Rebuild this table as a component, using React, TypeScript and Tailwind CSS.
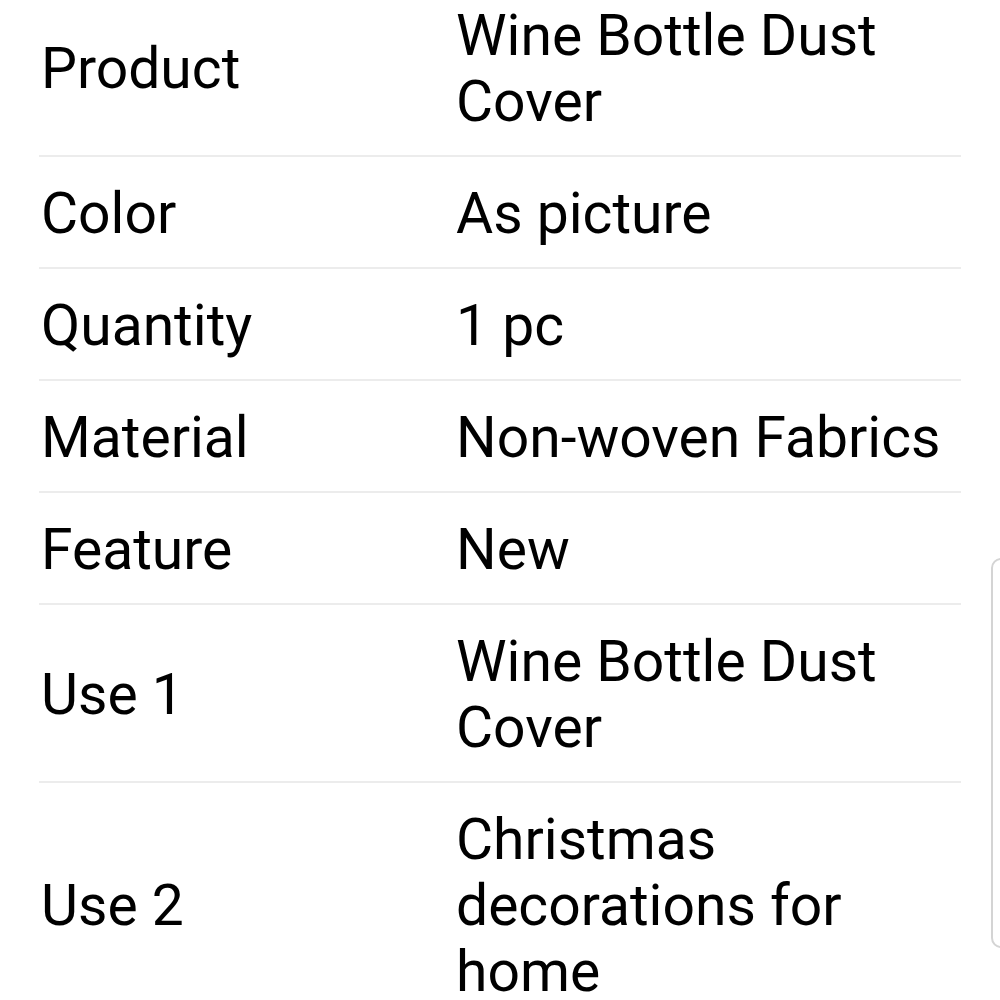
const rows: { label: string; value: string }[] = [
  { label: "Product", value: "Wine Bottle Dust Cover" },
  { label: "Color", value: "As picture" },
  { label: "Quantity", value: "1 pc" },
  { label: "Material", value: "Non-woven Fabrics" },
  { label: "Feature", value: "New" },
  { label: "Use 1", value: "Wine Bottle Dust Cover" },
  { label: "Use 2", value: "Christmas decorations for home" },
]

export default function App() {
  return (
    <div className="relative h-[1000px] w-[1000px] overflow-hidden bg-white font-['Roboto',sans-serif] text-black">
      <div className="mx-[39px] -mt-[21px]">
        {rows.map((row, i) => (
          <div
            key={i}
            className="grid grid-cols-[417px_1fr] items-center border-b-2 border-[#ececec] pt-[24px] pb-[20px] text-[57px] leading-[66px]"
          >
            <div className="pl-[2px]">{row.label}</div>
            <div>{row.value}</div>
          </div>
        ))}
      </div>
      <div className="absolute left-[991px] top-[558px] h-[390px] w-[20px] rounded-[10px] border-2 border-[#d4d4d4] bg-white" />
    </div>
  )
}
